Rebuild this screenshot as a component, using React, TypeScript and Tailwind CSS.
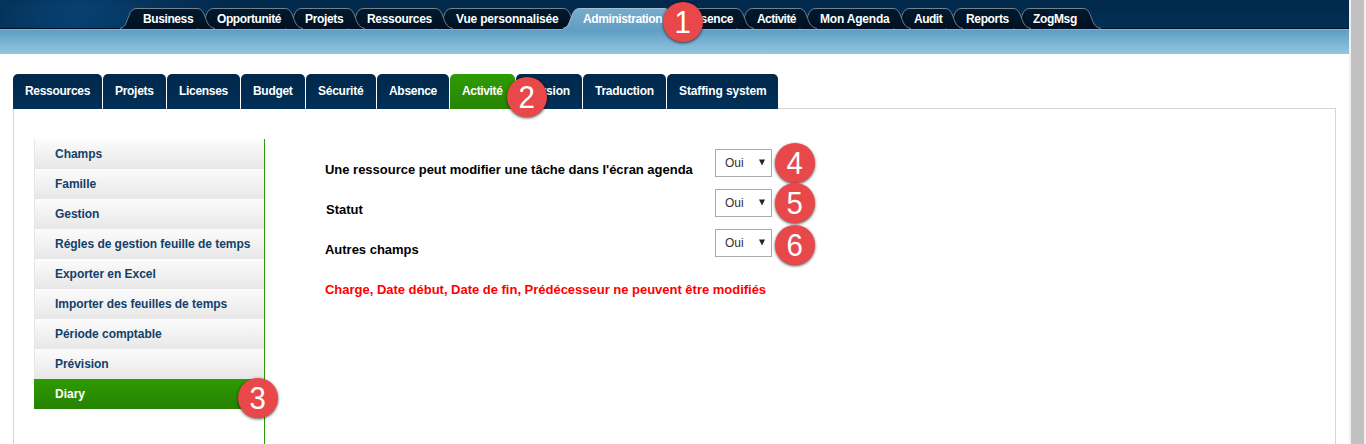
import React from "react";

type NavTab = { label: string; w: number; tw: string; pad: number; active?: boolean };

const navTabs: NavTab[] = [
  { label: "Business", w: 77, tw: "tracking-[-0.4px]", pad: 15 },
  { label: "Opportunité", w: 88, tw: "tracking-[-0.42px]", pad: 12 },
  { label: "Projets", w: 62, tw: "tracking-[-0.35px]", pad: 12 },
  { label: "Ressources", w: 88, tw: "tracking-[-0.32px]", pad: 12 },
  { label: "Vue personnalisée", w: 128, tw: "tracking-[-0.18px]", pad: 13 },
  { label: "Administration", w: 101, tw: "tracking-[-0.4px]", pad: 12, active: true },
  { label: "Absence", w: 72, tw: "tracking-[-0.25px]", pad: 13 },
  { label: "Activité", w: 63, tw: "tracking-[-0.55px]", pad: 13 },
  { label: "Mon Agenda", w: 94, tw: "tracking-[-0.2px]", pad: 13 },
  { label: "Audit", w: 52, tw: "tracking-[-0.5px]", pad: 13 },
  { label: "Reports", w: 68, tw: "tracking-[-0.35px]", pad: 13 },
  { label: "ZogMsg", w: 70, tw: "tracking-[-0.35px]", pad: 12 },
];

const subTabs = [
  { label: "Ressources", w: "w-[89px] tracking-[-0.3px]" },
  { label: "Projets", w: "w-[63px] tracking-[-0.3px]" },
  { label: "Licenses", w: "w-[73px] tracking-[-0.3px]" },
  { label: "Budget", w: "w-[64px] tracking-[-0.3px]" },
  { label: "Sécurité", w: "w-[70px] tracking-[-0.25px]" },
  { label: "Absence", w: "w-[72px] tracking-[-0.3px]" },
  { label: "Activité", w: "w-[65px] tracking-[-0.35px]", active: true, badge: "2" },
  { label: "Version", w: "w-[66px] tracking-[-0.2px]" },
  { label: "Traduction", w: "w-[83px] tracking-[-0.25px]" },
  { label: "Staffing system", w: "w-[111px] tracking-[-0.12px]" },
];

const menu = [
  "Champs",
  "Famille",
  "Gestion",
  "Régles de gestion feuille de temps",
  "Exporter en Excel",
  "Importer des feuilles de temps",
  "Période comptable",
  "Prévision",
  "Diary",
];

const settings = [
  { label: "Une ressource peut modifier une tâche dans l'écran agenda", badge: "4", pos: "left-[59px] -top-[7px]", pad: "" },
  { label: "Statut", badge: "5", pos: "left-[59px] -top-[7px]", pad: "pl-px" },
  { label: "Autres champs", badge: "6", pos: "left-[59px] -top-[5px]", pad: "" },
];

function Badge({ n, className }: { n: string; className: string }) {
  return (
    <span
      className={`absolute z-30 flex h-10 w-10 items-center justify-center rounded-full bg-[#e84849] text-[31px] leading-none font-normal tracking-normal text-white shadow-[0_1px_3px_rgba(0,0,0,0.7)] ${className}`}
    >
      <span className="scale-x-95">{n}</span>
    </span>
  );
}

function TabShape({ w, active }: { w: number; active?: boolean }) {
  const d = `M-8 20.5 C-2 19 -2 14 0.5 9 C2 5 3 0.5 9 0.5 H${w - 8} C${w - 3} 0.5 ${w - 1.5} 5 ${w} 8.5 C${w + 2} 14 ${w + 3} 19 ${w + 10} 20.5`;
  return (
    <svg className="absolute top-0 -left-2" width={w + 18} height={22} viewBox={`-8 0 ${w + 18} 22`}>
      <defs>
        <linearGradient id="tabOn" x1="0" y1="0" x2="0" y2="1">
          <stop offset="0" stopColor="#78acca" />
          <stop offset="1" stopColor="#629ec5" />
        </linearGradient>
        <linearGradient id="tabOff" x1="0" y1="0" x2="0" y2="1">
          <stop offset="0" stopColor="#001a2f" />
          <stop offset="1" stopColor="#001122" />
        </linearGradient>
      </defs>
      <path d={active ? `${d} V22 H-8 Z` : `${d} Z`} fill={active ? "url(#tabOn)" : "url(#tabOff)"} />
      <path d={d} fill="none" stroke={active ? "#a3bfd2" : "#75828d"} />
    </svg>
  );
}

export default function App() {
  return (
    <div className="flex h-[444px] w-[1366px] overflow-hidden bg-white font-['Liberation_Sans',Arial,sans-serif] text-[12px] font-bold">
      <div className="flex w-[1349px] flex-col">
        <header className="h-[54px] shrink-0">
          <div className="h-[29px] border-b border-[#00101f] bg-[radial-gradient(ellipse_90px_34px_at_75px_24px,rgba(6,70,125,0.7)_0%,transparent_100%),radial-gradient(ellipse_160px_30px_at_80px_4px,rgba(12,66,112,0.75)_0%,transparent_100%),linear-gradient(#00284a,#003056)] pt-2 pl-32">
            <nav className="flex">
              {navTabs.map((t, i) => (
                <div
                  key={t.label}
                  className="relative h-[22px] shrink-0"
                  style={{ width: t.w, zIndex: t.active ? 20 : 15 - i }}
                >
                  <TabShape w={t.w} active={t.active} />
                  <a className={`relative block leading-[22px] whitespace-nowrap text-white ${t.tw}`} style={{ paddingLeft: t.pad }}>
                    {t.label}
                  </a>
                  {t.active && <Badge n="1" className="-top-[6px] left-[92px]" />}
                </div>
              ))}
            </nav>
          </div>
          <div className="h-[25px] border-t border-[#87b0d0] bg-linear-to-b from-[#5e9dc6] to-[#94c7dd]" />
        </header>

        <main className="mt-5 flex min-h-0 flex-1 flex-col pr-[13px] pl-[13px]">
          <nav className="relative z-10 flex h-[35px] shrink-0 gap-px">
            {subTabs.map((t) => (
              <div
                key={t.label}
                className={`relative flex shrink-0 items-center rounded-t-[5px] pb-[2px] pl-3 whitespace-nowrap text-white ${t.w} ${
                  t.active ? "z-10 bg-linear-to-b from-[#2f9c03] to-[#288402]" : "bg-linear-to-b from-[#00284a] to-[#003059]"
                }`}
              >
                {t.label}
                {t.badge && <Badge n={t.badge} className="top-[3px] left-[57px]" />}
              </div>
            ))}
          </nav>

          <section className="-mt-px flex flex-1 border border-b-0 border-[#d6d6d6] pt-[30px] pl-5">
            <ul className="w-[231px] shrink-0 border-r border-[#2d9a01]">
              {menu.map((m) => (
                <li
                  key={m}
                  className={
                    m === "Diary"
                      ? "relative -mr-px h-[30px] bg-linear-to-b from-[#2e9a02] to-[#268201] pl-[21px] leading-[30px] text-white"
                      : "h-[30px] border-l border-[#e6e6e6] bg-linear-to-b from-[#fcfcfc] to-[#e7e7e7] pl-5 leading-[30px] tracking-[-0.04px] whitespace-nowrap text-[#12406b]"
                  }
                >
                  {m}
                  {m === "Diary" && <Badge n="3" className="-top-px left-[204px]" />}
                </li>
              ))}
            </ul>

            <div className="ml-[60px] pt-[10px] text-[13px] tracking-[-0.015px] text-black">
              {settings.map((s) => (
                <div key={s.label} className="flex h-10">
                  <span className={`w-[390px] pt-[11px] leading-[20px] whitespace-nowrap ${s.pad}`}>{s.label}</span>
                  <div className="relative flex h-7 w-[57px] items-center justify-between border border-[#aaa] pr-[6px] pb-px pl-[9px] text-[12px] font-normal text-[#333]">
                    Oui
                    <svg width="6" height="7" viewBox="0 0 6 7">
                      <path d="M0 0.5H6L3 6.5Z" fill="#222" />
                    </svg>
                    <Badge n={s.badge} className={s.pos} />
                  </div>
                </div>
              ))}
              <p className="pt-[11px] leading-[20px] text-[#f00]">Charge, Date début, Date de fin, Prédécesseur ne peuvent être modifiés</p>
            </div>
          </section>
        </main>
      </div>
      <div className="w-[17px] shrink-0 bg-[#f1f1f1] pr-[2px] pl-[2px]">
        <div className="h-full bg-[#c1c1c1]" />
      </div>
    </div>
  );
}
